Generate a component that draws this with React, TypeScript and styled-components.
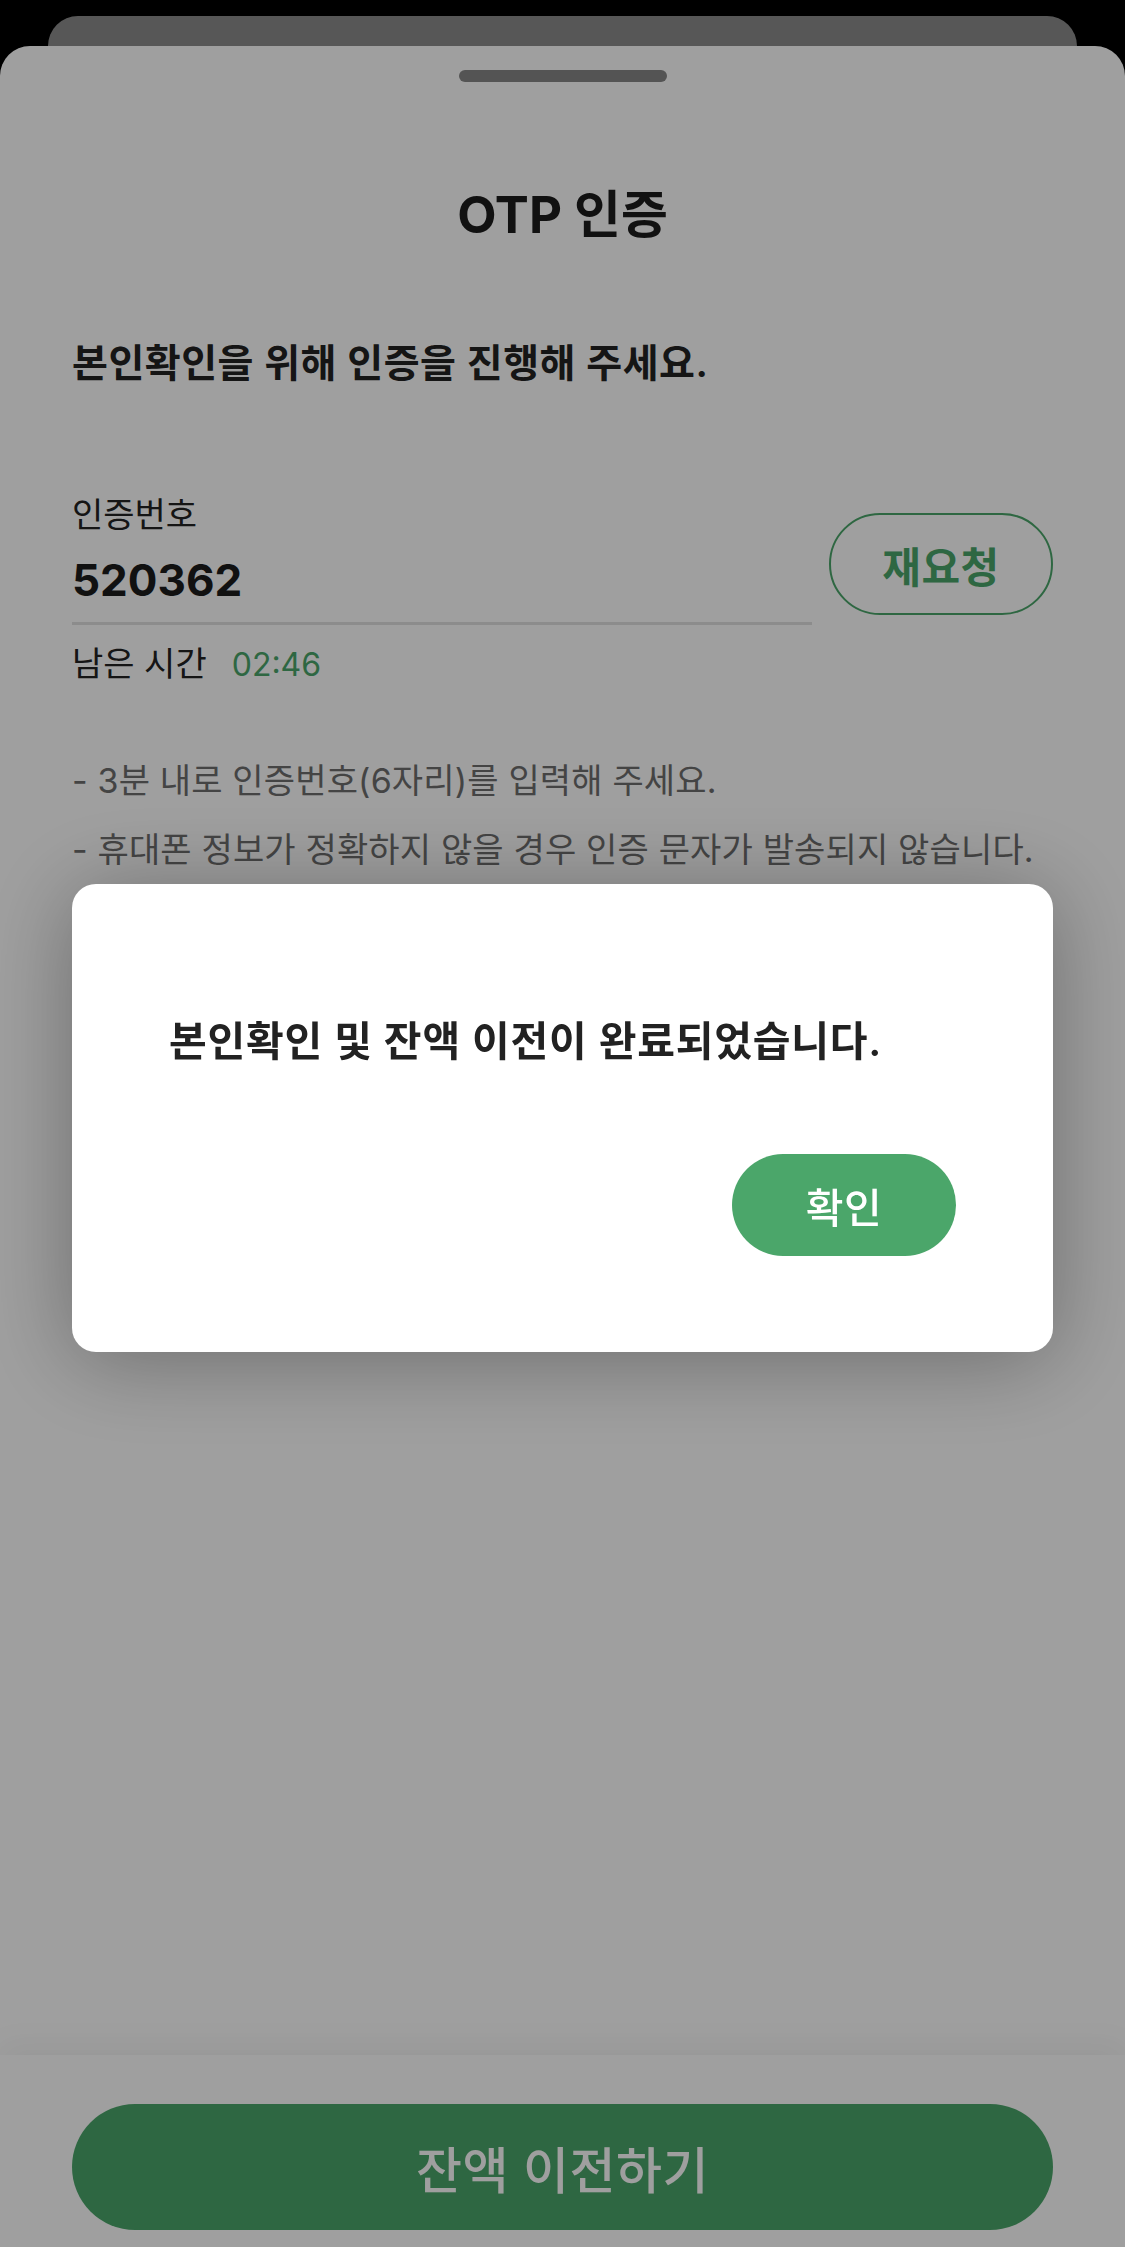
import React from "react";
import styled, { createGlobalStyle } from "styled-components";

const GlobalStyle = createGlobalStyle`
  html, body {
    margin: 0;
    padding: 0;
    background: #000;
  }
  body {
    font-family: "Inter", "Noto Sans CJK KR", sans-serif;
    -webkit-font-smoothing: antialiased;
  }
`;

const GREEN = "#4ba66a";

const Page = styled.div`
  width: 1125px;
  height: 2247px;
  overflow: hidden;
  display: flex;
  flex-direction: column;
  background: #000;
`;

const BackCard = styled.div`
  height: 30px;
  margin: 16px 48px 0;
  background: #8c8c8c;
  border-radius: 30px 30px 0 0;
  flex-shrink: 0;
`;

const Sheet = styled.div`
  flex: 1;
  display: flex;
  flex-direction: column;
  background: #fff;
  border-radius: 30px 30px 0 0;
`;

const Handle = styled.div`
  width: 208px;
  height: 12px;
  margin: 24px auto 0;
  border-radius: 6px;
  background: #878787;
`;

const Content = styled.div`
  flex: 1;
  padding: 0 72px;
  display: flex;
  flex-direction: column;
`;

const Title = styled.h1`
  margin: 105px 0 0;
  font-size: 51px;
  line-height: 56px;
  font-weight: 700;
  color: #1c1c1c;
  text-align: center;
`;

const Lead = styled.p`
  margin: 97px 0 0;
  font-size: 39px;
  line-height: 46px;
  letter-spacing: 0.5px;
  font-weight: 600;
  color: #222;
`;

const FieldRow = styled.div`
  margin-top: 109px;
  display: flex;
  align-items: flex-start;
  gap: 17px;
`;

const Field = styled.div`
  flex: 1;
  display: flex;
  flex-direction: column;
  border-bottom: 3px solid #e0e0e0;
  padding-bottom: 14px;
`;

const Label = styled.span`
  font-size: 34px;
  line-height: 40px;
  color: #222;
`;

const Value = styled.span`
  margin-top: 17px;
  font-size: 44px;
  line-height: 56px;
  font-weight: 700;
  color: #1c1c1c;
`;

const OutlineButton = styled.button`
  width: 224px;
  height: 102px;
  margin-top: 18px;
  flex-shrink: 0;
  border: 2px solid ${GREEN};
  border-radius: 51px;
  background: #fff;
  color: ${GREEN};
  font-family: inherit;
  font-size: 42px;
  letter-spacing: 0.5px;
  font-weight: 700;
  padding: 0;
`;

const TimerRow = styled.div`
  margin-top: 18px;
  display: flex;
  align-items: baseline;
  gap: 25px;
  font-size: 34px;
  line-height: 42px;
  color: #222;
`;

const Timer = styled.span`
  font-size: 32px;
  color: ${GREEN};
`;

const Notes = styled.ul`
  list-style: none;
  margin: 74px 0 0;
  padding: 0;
  display: flex;
  flex-direction: column;
  gap: 27px;
`;

const Note = styled.li`
  font-size: 34px;
  line-height: 42px;
  letter-spacing: 0.15px;
  color: #6e6e6e;
`;

const BottomBar = styled.div`
  height: 192px;
  flex-shrink: 0;
  box-sizing: border-box;
  padding: 49px 72px 0;
  background: #fff;
  box-shadow: 0 -10px 30px rgba(0, 0, 0, 0.05);
`;

const PrimaryButton = styled.button<{ $height: number; $size: number }>`
  width: 100%;
  height: ${(p) => p.$height}px;
  border: none;
  border-radius: ${(p) => p.$height / 2}px;
  background: ${GREEN};
  color: #fff;
  font-family: inherit;
  font-size: ${(p) => p.$size}px;
  letter-spacing: 0.5px;
  font-weight: 500;
  padding: 0;
`;

const Overlay = styled.div`
  position: fixed;
  inset: 0;
  background: rgba(0, 0, 0, 0.376);
  display: flex;
  align-items: center;
  justify-content: center;
  padding-bottom: 12px;
  box-sizing: border-box;
`;

const Dialog = styled.div`
  width: 981px;
  height: 468px;
  box-sizing: border-box;
  padding: 132px 97px 96px;
  background: #fff;
  border-radius: 24px;
  box-shadow: 0 8px 90px rgba(0, 0, 0, 0.32);
  display: flex;
  flex-direction: column;
`;

const Message = styled.p`
  margin: 0;
  font-size: 41px;
  line-height: 50px;
  letter-spacing: 0.8px;
  font-weight: 600;
  color: #222;
`;

const DialogActions = styled.div`
  margin-top: auto;
  display: flex;
  justify-content: flex-end;
`;

const ConfirmButton = styled(PrimaryButton)`
  width: 224px;
`;

export default function App() {
  return (
    <>
      <GlobalStyle />
      <Page>
        <BackCard />
        <Sheet>
          <Handle />
          <Content>
            <Title>OTP 인증</Title>
            <Lead>본인확인을 위해 인증을 진행해 주세요.</Lead>
            <FieldRow>
              <Field>
                <Label>인증번호</Label>
                <Value>520362</Value>
              </Field>
              <OutlineButton>재요청</OutlineButton>
            </FieldRow>
            <TimerRow>
              <span>남은 시간</span>
              <Timer>02:46</Timer>
            </TimerRow>
            <Notes>
              <Note>- 3분 내로 인증번호(6자리)를 입력해 주세요.</Note>
              <Note>- 휴대폰 정보가 정확하지 않을 경우 인증 문자가 발송되지 않습니다.</Note>
            </Notes>
          </Content>
          <BottomBar>
            <PrimaryButton $height={126} $size={50}>잔액 이전하기</PrimaryButton>
          </BottomBar>
        </Sheet>
      </Page>
      <Overlay>
        <Dialog>
          <Message>본인확인 및 잔액 이전이 완료되었습니다.</Message>
          <DialogActions>
            <ConfirmButton $height={102} $size={41}>확인</ConfirmButton>
          </DialogActions>
        </Dialog>
      </Overlay>
    </>
  );
}
